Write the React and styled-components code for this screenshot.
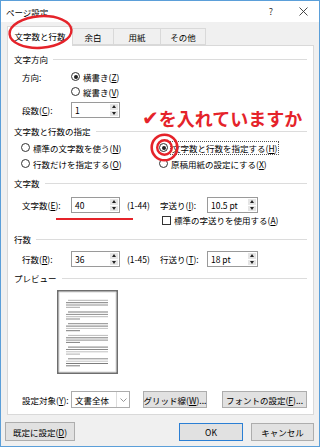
import styled, { createGlobalStyle } from "styled-components";

const GlobalStyle = createGlobalStyle`
  html, body {
    margin: 0;
    padding: 0;
    background: #ffffff;
  }
  body {
    font-family: "Noto Sans CJK JP", sans-serif;
    font-size: 8.5px;
    color: #000;
  }
`;

const RED = "#e5232a";

const Window = styled.div`
  position: relative;
  width: 320px;
  height: 447px;
  box-sizing: border-box;
  border: 1px solid #5b9fd9;
  background: #f0f0f0;
  display: flex;
  flex-direction: column;
  overflow: hidden;
`;

const TitleBar = styled.div`
  height: 21px;
  background: #ffffff;
  display: flex;
  align-items: center;
  padding-left: 5px;
`;

const TitleText = styled.span`
  flex: 1;
`;

const TitleButton = styled.div`
  width: 32px;
  height: 21px;
  display: flex;
  align-items: center;
  justify-content: center;
  font-size: 9px;
  color: #333;
`;

const TabStrip = styled.div`
  display: flex;
  align-items: flex-end;
  height: 19px;
  margin-top: 4px;
  padding-left: 6px;
`;

const Tab = styled.div`
  position: relative;
  box-sizing: border-box;
  width: ${(p) => p.$w}px;
  height: ${(p) => (p.$active ? 20 : 17)}px;
  margin-bottom: ${(p) => (p.$active ? -1 : 0)}px;
  margin-left: -1px;
  border: 1px solid #d9d9d9;
  border-bottom: ${(p) => (p.$active ? "none" : "1px solid #d9d9d9")};
  background: ${(p) => (p.$active ? "#ffffff" : "#f0f0f0")};
  z-index: ${(p) => (p.$active ? 2 : 1)};
  display: flex;
  align-items: center;
  justify-content: center;
  padding-bottom: ${(p) => (p.$active ? 2 : 0)}px;
  &:first-child {
    margin-left: 0;
  }
`;

const Panel = styled.div`
  position: relative;
  box-sizing: border-box;
  height: 370px;
  margin: 0 5px 0 6px;
  border: 1px solid #d9d9d9;
  background: #ffffff;
  padding: 0 6px 0 6px;
  display: flex;
  flex-direction: column;
`;

const SectionHeader = styled.div`
  display: flex;
  align-items: center;
  height: 12px;
  margin-top: ${(p) => p.$mt}px;
  &::after {
    content: "";
    flex: 1;
    height: 1px;
    background: #dcdcdc;
    margin-left: 5px;
  }
`;

const Row = styled.div`
  display: flex;
  align-items: center;
  height: ${(p) => p.$h}px;
  margin-top: ${(p) => p.$mt || 0}px;
  padding-left: ${(p) => p.$pl || 0}px;
`;

const Label = styled.span`
  width: ${(p) => p.$w}px;
  flex-shrink: 0;
  white-space: nowrap;
`;

const Mn = styled.span`
  text-decoration: underline;
`;

const RadioWrap = styled.label`
  display: flex;
  align-items: center;
  width: ${(p) => (p.$w ? `${p.$w}px` : "auto")};
  white-space: nowrap;
`;

const RadioDot = styled.span`
  position: relative;
  box-sizing: border-box;
  width: 9px;
  height: 9px;
  border-radius: 50%;
  border: 1px solid #333;
  background: #fff;
  margin-right: 3px;
  flex-shrink: 0;
  &::after {
    content: "";
    display: ${(p) => (p.$on ? "block" : "none")};
    position: absolute;
    left: 1.5px;
    top: 1.5px;
    width: 4px;
    height: 4px;
    border-radius: 50%;
    background: #222;
  }
`;

const FocusText = styled.span`
  outline: 1px dotted #555;
  outline-offset: 0;
  padding: 0 1px;
`;

const CheckBox = styled.span`
  box-sizing: border-box;
  width: 9px;
  height: 9px;
  border: 1px solid #333;
  background: #fff;
  margin-right: 3px;
  flex-shrink: 0;
`;

const SpinBox = styled.div`
  box-sizing: border-box;
  width: ${(p) => p.$w}px;
  height: 16px;
  border: 1px solid #9a9a9a;
  background: #fff;
  display: flex;
  flex-shrink: 0;
`;

const SpinValue = styled.span`
  flex: 1;
  padding-left: 3px;
  display: flex;
  align-items: center;
`;

const SpinArrows = styled.div`
  width: 8px;
  margin: 1px;
  display: flex;
  flex-direction: column;
  gap: 1px;
`;

const Arrow = styled.div`
  flex: 1;
  background: #e5e5e5;
  display: flex;
  align-items: center;
  justify-content: center;
  &::after {
    content: "";
    width: 0;
    height: 0;
    border-left: 2.5px solid transparent;
    border-right: 2.5px solid transparent;
    ${(p) =>
      p.$up
        ? "border-bottom: 3px solid #222;"
        : "border-top: 3px solid #222;"}
  }
`;

const RangeText = styled.span`
  width: ${(p) => p.$w}px;
  margin-left: 7px;
  flex-shrink: 0;
  white-space: nowrap;
`;

const PreviewBox = styled.div`
  margin-top: 6px;
  margin-left: 43px;
  height: 85px;
`;

const Select = styled.div`
  box-sizing: border-box;
  width: 59px;
  height: 17px;
  border: 1px solid #acacac;
  background: #fff;
  display: flex;
  flex-shrink: 0;
`;

const SelectText = styled.span`
  flex: 1;
  padding-left: 3px;
  display: flex;
  align-items: center;
`;

const SelectArrow = styled.span`
  width: 12px;
  border-left: 1px solid #dcdcdc;
  display: flex;
  align-items: center;
  justify-content: center;
`;

const Button = styled.div`
  box-sizing: border-box;
  width: ${(p) => p.$w}px;
  height: ${(p) => p.$h || 17}px;
  margin-left: ${(p) => p.$ml || 0}px;
  border: 1px solid ${(p) => (p.$default ? "#2b7fd4" : "#adadad")};
  background: #e1e1e1;
  display: flex;
  align-items: center;
  justify-content: center;
  white-space: nowrap;
  flex-shrink: 0;
`;

const BottomBar = styled.div`
  display: flex;
  align-items: center;
  margin-top: 7px;
  padding: 0 5px 0 4px;
`;

const Spacer = styled.div`
  flex: 1;
`;

const Overlay = styled.svg`
  position: absolute;
  left: ${(p) => p.$x}px;
  top: ${(p) => p.$y}px;
  overflow: visible;
  pointer-events: none;
  z-index: 10;
`;

const Callout = styled.div`
  position: absolute;
  left: 141px;
  top: 107px;
  display: flex;
  align-items: center;
  height: 20px;
  font-family: "Noto Sans CJK JP", "DejaVu Sans", sans-serif;
  font-size: 18px;
  font-weight: 700;
  line-height: 20px;
  color: ${RED};
  white-space: nowrap;
  z-index: 10;
`;

const Check = styled.span`
  font-family: "DejaVu Sans", sans-serif;
  font-size: 20px;
  line-height: 20px;
  margin-right: 0;
`;

const RedLine = styled.div`
  position: absolute;
  left: 55px;
  top: 217px;
  width: 77px;
  height: 2px;
  background: ${RED};
  z-index: 10;
`;

const Spin = ({ w, value }) => (
  <SpinBox $w={w}>
    <SpinValue>{value}</SpinValue>
    <SpinArrows>
      <Arrow $up />
      <Arrow />
    </SpinArrows>
  </SpinBox>
);

const PreviewPage = () => {
  const shades = [
    ["#b4b4b4", "#7c7c7c", "#8e8e8e", "#a8a8a8"],
    ["#7c7c7c", "#909090", "#b8b8b8", "#8a8a8a"],
    ["#8a8a8a", "#7c7c7c", "#c2c2c2", "#7c7c7c"],
    ["#bcbcbc", "#7c7c7c", "#8e8e8e", "#808080"],
    ["#7c7c7c", "#8a8a8a", "#c0c0c0", "#b0b0b0"],
    ["#8a8a8a", "#c4c4c4", "#7c7c7c", "#7c7c7c"],
  ];
  return (
    <svg width="62" height="85" viewBox="0 0 62 85">
      <rect x="0.8" y="0.8" width="59.4" height="82.4" fill="#fff" stroke="#6e6e6e" strokeWidth="1.6" />
      <rect x="2.2" y="2.2" width="56.6" height="79.6" fill="none" stroke="#d8d8d8" strokeWidth="0.6" />
      {shades.map((p, i) => {
        const y0 = 9.8 + i * 11.7;
        return (
          <g key={i}>
            <rect x="11" y={y0} width="40" height="1" fill={p[0]} />
            <rect x="9" y={y0 + 2.4} width="42" height="1" fill={p[1]} />
            <rect x="9" y={y0 + 4.7} width="42" height="1" fill={p[2]} />
            <rect x="9" y={y0 + 7} width="14" height="1" fill={p[3]} />
          </g>
        );
      })}
    </svg>
  );
};

export default function App() {
  return (
    <>
      <GlobalStyle />
      <Window>
        <TitleBar>
          <TitleText>ページ設定</TitleText>
          <TitleButton>?</TitleButton>
          <TitleButton>
            <svg width="9" height="9" viewBox="0 0 9 9">
              <path d="M0.5 0.5 L8.5 8.5 M8.5 0.5 L0.5 8.5" stroke="#333" strokeWidth="0.9" />
            </svg>
          </TitleButton>
        </TitleBar>

        <TabStrip>
          <Tab $w={66} $active>文字数と行数</Tab>
          <Tab $w={42}>余白</Tab>
          <Tab $w={48}>用紙</Tab>
          <Tab $w={46}>その他</Tab>
        </TabStrip>

        <Panel>
          <SectionHeader $mt={7}>文字方向</SectionHeader>
          <Row $h={15} $mt={4} $pl={8}>
            <Label $w={49}>方向:</Label>
            <RadioWrap>
              <RadioDot $on />
              横書き(<Mn>Z</Mn>)
            </RadioWrap>
          </Row>
          <Row $h={15} $pl={57}>
            <RadioWrap>
              <RadioDot />
              縦書き(<Mn>V</Mn>)
            </RadioWrap>
          </Row>
          <Row $h={16} $mt={3} $pl={8}>
            <Label $w={49}>
              段数(<Mn>C</Mn>):
            </Label>
            <Spin w={49} value="1" />
          </Row>

          <SectionHeader $mt={7}>文字数と行数の指定</SectionHeader>
          <Row $h={15} $mt={3} $pl={7}>
            <RadioWrap $w={138}>
              <RadioDot />
              標準の文字数を使う(<Mn>N</Mn>)
            </RadioWrap>
            <RadioWrap>
              <RadioDot $on />
              <FocusText>
                文字数と行数を指定する(<Mn>H</Mn>)
              </FocusText>
            </RadioWrap>
          </Row>
          <Row $h={15} $mt={1} $pl={7}>
            <RadioWrap $w={138}>
              <RadioDot />
              行数だけを指定する(<Mn>O</Mn>)
            </RadioWrap>
            <RadioWrap>
              <RadioDot />
              原稿用紙の設定にする(<Mn>X</Mn>)
            </RadioWrap>
          </Row>

          <SectionHeader $mt={6}>文字数</SectionHeader>
          <Row $h={16} $mt={8} $pl={8}>
            <Label $w={49}>
              文字数(<Mn>E</Mn>):
            </Label>
            <Spin w={49} value="40" />
            <RangeText $w={33}>(1-44)</RangeText>
            <Label $w={47}>
              字送り(<Mn>I</Mn>):
            </Label>
            <Spin w={51} value="10.5 pt" />
          </Row>
          <Row $h={14} $pl={148}>
            <CheckBox />
            標準の字送りを使用する(<Mn>A</Mn>)
          </Row>

          <SectionHeader $mt={6}>行数</SectionHeader>
          <Row $h={16} $mt={6} $pl={8}>
            <Label $w={49}>
              行数(<Mn>R</Mn>):
            </Label>
            <Spin w={49} value="36" />
            <RangeText $w={33}>(1-45)</RangeText>
            <Label $w={47}>
              行送り(<Mn>T</Mn>):
            </Label>
            <Spin w={51} value="18 pt" />
          </Row>

          <SectionHeader $mt={5}>プレビュー</SectionHeader>
          <PreviewBox>
            <PreviewPage />
          </PreviewBox>

          <Row $h={17} $mt={16} $pl={8}>
            <Label $w={49}>
              設定対象(<Mn>Y</Mn>):
            </Label>
            <Select>
              <SelectText>文書全体</SelectText>
              <SelectArrow>
                <svg width="7" height="4" viewBox="0 0 7 4">
                  <path d="M0.5 0.5 L3.5 3.5 L6.5 0.5" fill="none" stroke="#8a8a8a" strokeWidth="0.9" />
                </svg>
              </SelectArrow>
            </Select>
            <Button $w={64} $ml={13}>
              グリッド線(<Mn>W</Mn>)...
            </Button>
            <Button $w={85} $ml={15}>
              フォントの設定(<Mn>F</Mn>)...
            </Button>
          </Row>
        </Panel>

        <BottomBar>
          <Button $w={70} $h={19}>
            既定に設定(<Mn>D</Mn>)
          </Button>
          <Spacer />
          <Button $w={64} $h={18} $default>
            OK
          </Button>
          <Button $w={63} $h={18} $ml={8}>
            キャンセル
          </Button>
        </BottomBar>

        <Overlay $x={5} $y={13} width="70" height="37" viewBox="0 0 70 37">
          <ellipse
            cx="34.5"
            cy="18"
            rx="31"
            ry="15.8"
            fill="none"
            stroke={RED}
            strokeWidth="2.4"
            transform="rotate(-4 34.5 18)"
          />
        </Overlay>
        <Callout>
          <Check>✔</Check>を入れていますか
        </Callout>
        <Overlay $x={149} $y={132} width="29" height="29" viewBox="0 0 29 29">
          <circle cx="14.5" cy="14.5" r="12.8" fill="none" stroke={RED} strokeWidth="2.6" />
          <circle cx="14.5" cy="14.5" r="7.3" fill="none" stroke={RED} strokeWidth="2.4" />
        </Overlay>
        <RedLine />
      </Window>
    </>
  );
}
